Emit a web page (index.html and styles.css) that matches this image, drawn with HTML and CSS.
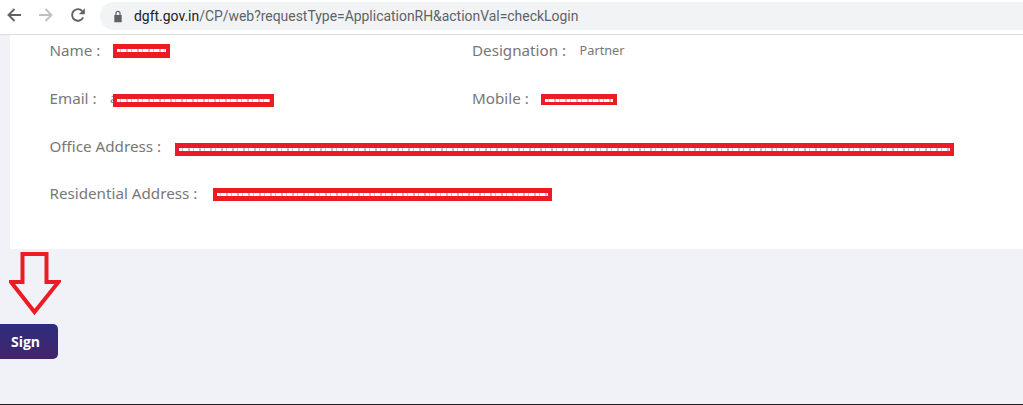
FILE: index.html
```html
<!DOCTYPE html>
<html lang="en">
<head>
<meta charset="utf-8">
<title>DGFT</title>
<link rel="stylesheet" href="styles.css">
</head>
<body>
<header class="toolbar">
  <svg class="nav back" viewBox="0 0 16 16"><path d="M15 8H2.500M8.500 2 2.500 8l6 6" fill="none" stroke="#5f6368" stroke-width="1.900"/></svg>
  <svg class="nav forward" viewBox="0 0 16 16"><path d="M1 8h12.500M7.500 2l6 6-6 6" fill="none" stroke="#bdc1c6" stroke-width="1.900"/></svg>
  <svg class="nav reload" viewBox="0 0 16 16"><path d="M13.200 10.400A5.800 5.800 0 1 1 12.200 4" fill="none" stroke="#5f6368" stroke-width="1.900"/><path d="M14.800 1.200v6h-6z" fill="#5f6368"/></svg>
  <div class="omnibox">
    <svg class="lock" viewBox="0 0 10 13"><path d="M2.400 5V3.400a2.600 2.600 0 0 1 5.200 0V5h1.100v7.200H1.300V5zm1.200 0h2.800V3.400a1.400 1.400 0 0 0-2.800 0z" fill="#5f6368"/></svg>
    <span class="url"><span class="host">dgft.gov.in</span>/CP/web?requestType=ApplicationRH&amp;actionVal=checkLogin</span>
  </div>
</header>
<main class="page">
  <section class="card">
    <div class="pair-row">
      <div class="field">
        <span class="label gap-name">Name :</span>
        <span class="value"><span class="redact w-name"></span></span>
      </div>
      <div class="field">
        <span class="label gap-desig">Designation :</span>
        <span class="plain">Partner</span>
      </div>
    </div>
    <div class="pair-row">
      <div class="field">
        <span class="label gap-email">Email :</span>
        <span class="plain">a</span>
        <span class="value tuck"><span class="redact w-email"></span></span>
      </div>
      <div class="field">
        <span class="label gap-mobile">Mobile :</span>
        <span class="value"><span class="redact w-mobile"></span></span>
      </div>
    </div>
    <div class="row">
      <div class="field">
        <span class="label gap-office">Office Address :</span>
        <span class="value"><span class="redact w-office"></span></span>
      </div>
    </div>
    <div class="row">
      <div class="field">
        <span class="label gap-res">Residential Address :</span>
        <span class="value"><span class="redact w-res"></span></span>
      </div>
    </div>
  </section>
  <svg class="arrow" viewBox="0 0 52 64"><path d="M13.500 2h24v28h12L25.500 60 2 30h11.500z" fill="none" stroke="#ed1c24" stroke-width="4"/></svg>
  <button class="sign" type="button">Sign</button>
</main>
</body>
</html>
```
FILE: styles.css
```css
* { box-sizing: border-box; }
html, body { margin: 0; height: 100%; }
body { width: 1023px; height: 405px; overflow: hidden; background: #f1f2f7; font-family: "Noto Sans", "Open Sans", sans-serif; border-bottom: 1px solid #222; }
.toolbar { height: 35px; background: #fff; border-bottom: 1px solid #dadce0; display: flex; align-items: flex-start; padding: 7px 0 0 6px; }
.nav { width: 16px; height: 16px; flex: none; }
.forward { margin-left: 16px; }
.reload { margin-left: 16px; }
.omnibox { flex: 1; height: 28px; margin: -5px 0 0 14px; background: #f1f3f4; border-radius: 14px 0 0 14px; display: flex; align-items: center; padding-left: 13px; }
.lock { width: 10px; height: 13px; flex: none; }
.url { margin-left: 11px; font-family: Roboto, sans-serif; font-size: 13.930px; color: #5f6368; white-space: nowrap; }
.host { color: #202124; }
.page { display: flex; flex-direction: column; align-items: flex-start; }
.card { margin-left: 10px; width: 1013px; height: 214px; background: #fff; padding: 3px 0 0 39.500px; }
.pair-row { display: grid; grid-template-columns: 422.500px 1fr; height: 48px; }
.row { height: 47px; }
.field { display: flex; align-items: center; height: 24px; white-space: nowrap; }
.label { font-size: 15.200px; color: #777; }
.plain { font-size: 12.700px; color: #777; }
.value { position: relative; display: inline-block; height: 24px; }
.tuck { margin-left: -4px; }
.redact { position: absolute; left: 0; top: 6px; height: 14px; background: #ed1c24; }
.redact::after { content: ""; position: absolute; left: 4px; right: 4px; top: 5px; height: 3px; background: repeating-linear-gradient(90deg, #fff 0 3px, #c9c3d6 3px 4px, #fff 4px 9px, #d9b6c0 9px 11px); }
.gap-name { margin-right: 12.500px; }
.gap-desig { margin-right: 13.500px; }
.gap-email { margin-right: 13.500px; }
.gap-mobile { margin-right: 12.500px; }
.gap-office { margin-right: 13.500px; }
.gap-res { margin-right: 15.500px; }
.w-name { width: 57px; }
.w-email { width: 161px; top: 8px; height: 13px; }
.w-mobile { width: 76px; height: 11px; top: 8px; }
.w-office { width: 779px; top: 9px; height: 13px; }
.w-res { width: 339px; top: 7px; height: 13px; }
.arrow { width: 52px; height: 64px; margin: 3px 0 0 9px; display: block; }
.sign { width: 68px; height: 35px; margin: 8px 0 0 -10px; padding: 0 0 0 3px; border: 0; border-radius: 5px; background: linear-gradient(180deg, #2b2e7e, #44246c); color: #fff; font-family: "Open Sans", sans-serif; font-weight: 700; font-size: 14px; }
```
